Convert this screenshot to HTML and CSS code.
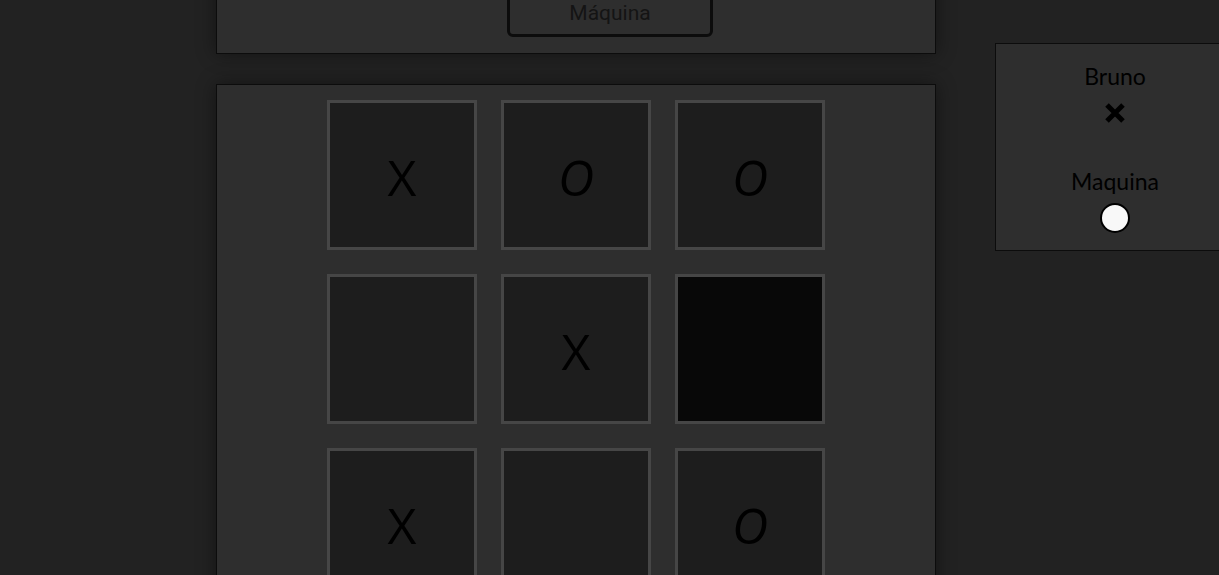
FILE: index.html
```html
<!DOCTYPE html>
<html lang="pt">
<head>
<meta charset="utf-8">
<title>Jogo da Velha</title>
<link rel="stylesheet" href="styles.css">
</head>
<body>
<div class="page">
  <main class="main">
    <section class="panel menu">
      <button class="mode-btn"><span class="btn-label">Jogar contra a<br>Máquina</span></button>
    </section>
    <section class="panel board-panel">
      <div class="board">
        <div class="cell">X</div>
        <div class="cell o">O</div>
        <div class="cell o">O</div>
        <div class="cell"></div>
        <div class="cell">X</div>
        <div class="cell active"></div>
        <div class="cell">X</div>
        <div class="cell"></div>
        <div class="cell o">O</div>
      </div>
    </section>
  </main>
  <aside class="panel side">
    <div class="player">
      <div class="name">Bruno</div>
      <svg class="mark-x" width="22" height="22" viewBox="0 0 22 22" aria-hidden="true">
        <path d="M3 3 L19 19 M19 3 L3 19" stroke="#000" stroke-width="5" fill="none"/>
      </svg>
    </div>
    <div class="player second">
      <div class="name">Maquina</div>
      <span class="mark-o"></span>
    </div>
  </aside>
</div>
</body>
</html>
```
FILE: styles.css
```css
html, body {
  margin: 0;
  padding: 0;
  background: #222222;
  overflow: hidden;
  height: 100%;
}

.page {
  display: flex;
  align-items: flex-start;
  padding-left: 216px;
  gap: 59px;
}

.main {
  width: 720px;
  flex-shrink: 0;
  margin-top: -48px;
  display: flex;
  flex-direction: column;
  gap: 30px;
}

.panel {
  background: #2e2e2e;
  border: 1px solid #0c0c0c;
  box-shadow: 0 0 18px rgba(0, 0, 0, 0.45);
  box-sizing: border-box;
}

.menu {
  padding: 15px 15px 16px 83px;
  display: flex;
  justify-content: center;
}

.mode-btn {
  width: 206px;
  height: 69px;
  box-sizing: border-box;
  background: #2e2e2e;
  border: 3px solid #0c0c0c;
  border-radius: 6px;
  padding: 6px 8px 9px;
  text-align: center;
  appearance: none;
}

.btn-label {
  display: block;
  color: #141414;
  -webkit-text-fill-color: #141414;
  font-family: Roboto, "Liberation Sans", sans-serif;
  font-size: 21px;
  line-height: 24px;
}

.board-panel {
  padding: 15px 0 40px;
  display: flex;
  justify-content: center;
}

.board {
  display: grid;
  grid-template-columns: repeat(3, 150px);
  grid-auto-rows: 150px;
  gap: 24px;
}

.cell {
  box-sizing: border-box;
  background: #1d1d1d;
  border: 3px solid #464646;
  display: flex;
  align-items: center;
  justify-content: center;
  color: #000;
  font-family: "Comic Sans MS", "Open Sans", sans-serif;
  font-size: 50px;
  font-weight: 500;
  line-height: 1;
  padding-top: 3px;
}

.cell.o {
  font-style: italic;
}

.cell.active {
  background: #080808;
}

.side {
  width: 240px;
  flex-shrink: 0;
  margin-top: 43px;
  padding: 18px 0 17px;
  display: flex;
  flex-direction: column;
  align-items: center;
  box-shadow: none;
}

.player {
  display: flex;
  flex-direction: column;
  align-items: center;
}

.player.second {
  margin-top: 43px;
}

.name {
  font-family: "Comic Sans MS", Lato, sans-serif;
  font-size: 23px;
  line-height: 28px;
  color: #000;
}

.mark-x {
  display: block;
  margin-top: 12px;
}

.mark-o {
  display: block;
  width: 30px;
  height: 30px;
  box-sizing: border-box;
  border: 2px solid #000;
  border-radius: 50%;
  background: #f8f8f8;
  margin-top: 8px;
}
```
